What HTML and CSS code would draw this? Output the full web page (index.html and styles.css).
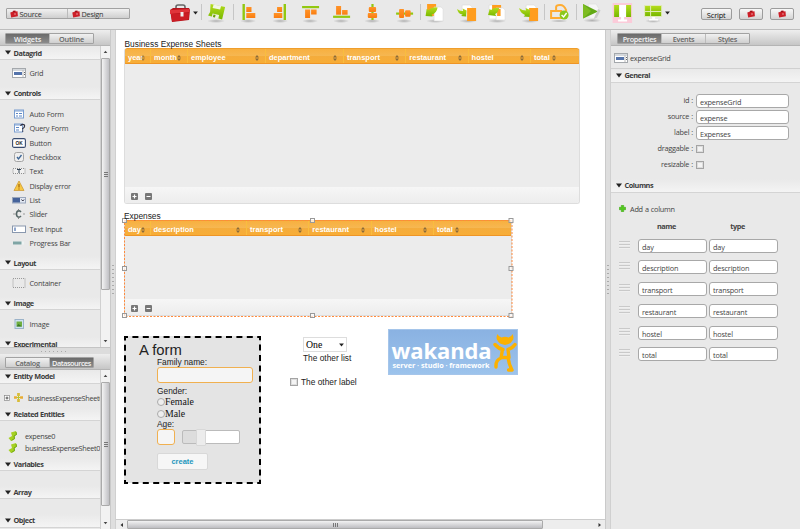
FILE: index.html
```
<!DOCTYPE html>
<html lang="en">
<head>
<meta charset="utf-8">
<title>GUI Designer</title>
<link rel="stylesheet" href="styles.css">
</head>
<body>
<svg class="defs" aria-hidden="true">
  <defs>
    <linearGradient id="og" x1="0" y1="0" x2="0" y2="1"><stop offset="0" stop-color="#ff9328"/><stop offset="1" stop-color="#f97c10"/></linearGradient>
    <linearGradient id="gg" x1="0" y1="0" x2="0" y2="1"><stop offset="0" stop-color="#b4dc1c"/><stop offset="1" stop-color="#78b800"/></linearGradient>
    <radialGradient id="sh"><stop offset="0" stop-color="#999" stop-opacity=".7"/><stop offset="1" stop-color="#999" stop-opacity="0"/></radialGradient>
    <symbol id="case" viewBox="0 0 20 19">
      <path d="M6 5V3q0-2 2-2h5q2 0 2 2v2" fill="none" stroke="#666" stroke-width="1.6"/>
      <path d="M0 6l3-2h16l1 2-1 10-17 2z" fill="#b5141c"/>
      <path d="M0 6l19-1 1 3-20 2z" fill="#e0343a"/>
      <path d="M1 10l18-1-.5 6.500-16.500 2z" fill="#cc1d25"/>
      <rect x="10.500" y="8" width="3" height="4.500" fill="#eee"/>
    </symbol>
    <symbol id="cam" viewBox="0 0 8 8">
      <path d="M.3 2.500L2.600 1.800 3 .8l2.400-.4.5 1 1.600-.2.400 5L1.200 7.600z" fill="#cc1f28"/>
      <path d="M3 1.800l2-.4" stroke="#7a1015" stroke-width=".7"/>
      <circle cx="5" cy="4" r=".8" fill="#eaa5a8"/>
    </symbol>
    <symbol id="sort" viewBox="0 0 4 6"><path d="M0 2.500L2 0l2 2.500zM0 3.500h4L2 6z" fill="#8a6a3a"/></symbol>
    <symbol id="tri" viewBox="0 0 6 5"><path d="M0 .5h6L3 4.500z" fill="#222"/></symbol>
    <symbol id="leaf" viewBox="0 0 10 10"><path d="M3 1.500l5-1.500 1 3.500-2.500 1.500.5 3-4 2-2.500-3L4 5z" fill="#a6d022"/><path d="M8 1l.5 2.500-2.500 1.500.5 2.500-3 2" fill="none" stroke="#6fa814" stroke-width="1"/></symbol>
    <symbol id="gridicon" viewBox="0 0 14 10">
      <rect x=".5" y=".5" width="13" height="9" fill="#fff" stroke="#a4a8ac"/><path d="M1 1h12v2H1z" fill="#d4d8dc"/><path d="M2 4h8v3H2z" fill="#5574ab"/><path d="M11 2v7" stroke="#bbb"/><path d="M12.500 4v1m0 1v1" stroke="#666"/>
    </symbol>
    <symbol id="plus" viewBox="0 0 7 7"><rect width="7" height="7" rx="1" fill="#777"/><path d="M1.500 3.500h4M3.500 1.500v4" stroke="#fff" stroke-width="1.200"/></symbol>
    <symbol id="minus" viewBox="0 0 7 7"><rect width="7" height="7" rx="1" fill="#777"/><path d="M1.500 3.500h4" stroke="#fff" stroke-width="1.200"/></symbol>
  </defs>
</svg>
<div class="app">
  <header class="toolbar">
    <div class="seg views">
      <span><svg class="mini"><use href="#cam"/></svg>Source</span>
      <span><svg class="mini"><use href="#cam"/></svg>Design</span>
    </div>
    <div class="toolbox"><svg class="big"><use href="#case"/></svg><svg class="caret"><use href="#tri"/></svg></div>
    <div class="tools">
      <svg class="sep" viewBox="0 0 31 28"><ellipse cx="15" cy="21" rx="9" ry="2" fill="url(#sh)"/><path d="M9.500 4l14.500 3-3 12.500L7 15.500l2-3.500z" fill="url(#gg)"/><path d="M12.500 4.500l7.500 1.500-1 3.500-7.500-1.500z" fill="#f2f6e6"/><path d="M11.500 13.500l6.500 1.500-.8 3.800-6.500-1.700z" fill="#eef3df"/><path d="M12.500 14.500l2 .5-.7 2.600-2-.5z" fill="#6a9d09"/></svg>
      <svg class="sep" viewBox="0 0 31 28"><ellipse cx="15" cy="21" rx="8" ry="2" fill="url(#sh)"/><rect x="9.400" y="4" width="2.400" height="16" fill="#92c810"/><rect x="13.200" y="7" width="5.200" height="5" fill="url(#og)"/><rect x="13.200" y="13" width="9" height="5" fill="url(#og)"/></svg>
      <svg viewBox="0 0 31 28"><ellipse cx="16" cy="21" rx="8" ry="2" fill="url(#sh)"/><rect x="19.500" y="4" width="2.400" height="16" fill="#92c810"/><rect x="13" y="7" width="5" height="5" fill="url(#og)"/><rect x="9.700" y="13" width="8.500" height="5" fill="url(#og)"/></svg>
      <svg viewBox="0 0 31 28"><ellipse cx="15" cy="21" rx="8" ry="2" fill="url(#sh)"/><rect x="7" y="6" width="17" height="2.200" fill="#92c810"/><rect x="10" y="9.500" width="5" height="8.500" fill="url(#og)"/><rect x="16" y="9.500" width="5.500" height="5" fill="url(#og)"/></svg>
      <svg viewBox="0 0 31 28"><ellipse cx="15" cy="21" rx="8" ry="2" fill="url(#sh)"/><rect x="7" y="15.700" width="17" height="2.200" fill="#92c810"/><rect x="10" y="6" width="5" height="8.700" fill="url(#og)"/><rect x="16" y="10" width="5.500" height="4.700" fill="url(#og)"/></svg>
      <svg viewBox="0 0 31 28"><ellipse cx="15" cy="21" rx="8" ry="2" fill="url(#sh)"/><rect x="14.300" y="4" width="2.200" height="16" fill="#92c810"/><rect x="11.700" y="7" width="7.300" height="5" rx="1" fill="url(#og)"/><rect x="10.700" y="13" width="9.300" height="5" rx="1" fill="url(#og)"/></svg>
      <svg viewBox="0 0 31 28"><ellipse cx="15" cy="21" rx="8" ry="2" fill="url(#sh)"/><rect x="7" y="12.500" width="17" height="2.200" fill="#92c810"/><rect x="10" y="9" width="5" height="9" rx="1" fill="url(#og)"/><rect x="16" y="10.300" width="5.500" height="6.400" rx="1" fill="url(#og)"/></svg>
      <svg class="sep" viewBox="0 0 31 28"><ellipse cx="15" cy="21" rx="9" ry="2" fill="url(#sh)"/><path d="M7 4h9v12H7z" fill="#ff9d1e"/><path d="M14 7h7l2 2v12h-9z" fill="#fff" stroke="#d8d8d8" stroke-width=".6"/><path d="M5.500 16l1-7 2 1q3-3.500 9-2.500-1 6-6 7l1 2z" fill="url(#gg)"/></svg>
      <svg viewBox="0 0 31 28"><ellipse cx="17" cy="21" rx="9" ry="2" fill="url(#sh)"/><path d="M11 5h8l2 2v9H11z" fill="#fff" stroke="#d8d8d8" stroke-width=".6"/><path d="M16 8h9v13h-9z" fill="#ff9d1e"/><path d="M6 9q3 2.500 6 2l-.5-2.500 4 2-.5 6-5-.5 1.500-1.500Q7 14 6 9z" fill="url(#gg)"/></svg>
      <svg viewBox="0 0 31 28"><ellipse cx="15" cy="21" rx="9" ry="2" fill="url(#sh)"/><path d="M7 5h8v14H7z" fill="#fff" stroke="#d8d8d8" stroke-width=".6"/><path d="M10 5h9v6h-9z" fill="#ff9d1e"/><path d="M14 8h7l2 2v10h-9z" fill="#fff" stroke="#d8d8d8" stroke-width=".6"/><path d="M15 9h3.500v7H15z" fill="#ff9d1e"/><path d="M6 15l1.500-6 1.500 1q3-3 8-2-1 5-4 6l1 2z" fill="url(#gg)"/></svg>
      <svg viewBox="0 0 31 28"><ellipse cx="17" cy="21" rx="9" ry="2" fill="url(#sh)"/><path d="M13 5h8l2 2v9H13z" fill="#fff" stroke="#d8d8d8" stroke-width=".6"/><path d="M16 8h9v13h-9z" fill="#ff9d1e"/><path d="M6 8q3 2.500 7 2.500l-.5-2.500 4.500 2-.5 7-6-.5 1.500-1.500Q7 13 6 8z" fill="url(#gg)"/></svg>
      <svg class="sep" viewBox="0 0 31 28"><ellipse cx="15" cy="21" rx="9" ry="1.500" fill="url(#sh)"/><path d="M12 11V7q0-2 4-2t6 5v5M7 11h10v7H7z" fill="none" stroke="#ffac32" stroke-width="2"/><circle cx="20" cy="15" r="4.500" fill="#8cc81c"/><path d="M17.500 15l2 2 3-4" fill="none" stroke="#fff" stroke-width="1.400"/></svg>
      <svg class="sep" viewBox="0 0 31 28"><ellipse cx="16" cy="20.500" rx="9" ry="2" fill="url(#sh)"/><path d="M12 4l8 0 3 5-2 10-8-1z" fill="#f6f6f6" stroke="#ddd" stroke-width=".6"/><path d="M7 4l15 7.500L7 18.500z" fill="#62aa16"/><path d="M7 4l8 7-8 7.500z" fill="#7dbc20"/><path d="M22 9l2.500 1.500-4 7.500-3 1z" fill="#ccc"/></svg>
      <svg viewBox="0 0 31 28"><rect x="5.500" y="3" width="19.500" height="20" fill="#fbcbd9"/><path d="M7 5h17v12H7z" fill="#fff"/><path d="M7 5h5v12H7zm12 0h5v12h-5z" fill="url(#gg)"/><path d="M14 17h3v2.500h3v2h-9v-2h3z" fill="#fff"/></svg>
      <svg viewBox="0 0 31 28"><ellipse cx="15" cy="21" rx="8" ry="2" fill="url(#sh)"/><path d="M6 5h18v12H6z" fill="#dfeab5"/><path d="M7 6h5v5H7zm6 0h10v5H13zM7 12h5v4H7zm6 0h10v4H13z" fill="url(#gg)"/><path d="M14 17h3v2h3v1.500h-9V19h3z" fill="#fff"/></svg>
    </div>
    <svg class="caret"><use href="#tri"/></svg>
    <div class="actions"><button class="script">Script</button><button><svg class="mini"><use href="#cam"/></svg></button><button><svg class="mini"><use href="#cam"/></svg></button></div>
  </header>

  <div class="work">
    <aside class="left">
      <section class="pane top">
        <div class="tabbar"><div class="seg two"><span class="on">Widgets</span><span>Outline</span></div></div>
        <div class="panebody">
          <div class="list">
            <h3><svg><use href="#tri"/></svg>Datagrid</h3>
            <ul><li><svg viewBox="0 0 14 10"><use href="#gridicon"/></svg>Grid</li></ul>
            <h3><svg><use href="#tri"/></svg>Controls</h3>
            <ul>
              <li><svg viewBox="0 0 14 10"><rect x="2.500" y="1" width="9" height="8" fill="#fff" stroke="#7b9ed0"/><path d="M3 2h8" stroke="#7b9ed0"/><path d="M4 4.500h2m1 0h3M4 7h2m1 0h3" stroke="#5c86c4"/></svg>Auto Form</li>
              <li><svg viewBox="0 0 14 10"><rect x="2.500" y="1" width="8" height="8" fill="#fff" stroke="#7b9ed0"/><path d="M3 2h7" stroke="#7b9ed0"/><path d="M4 4.500h3M4 7h3" stroke="#5c86c4"/><path d="M8.800 3q0-1.700 1.900-1.700t1.900 1.700-1.900 2.500v1m0 1v1.300" fill="none" stroke="#334" stroke-width="1.200"/></svg>Query Form</li>
              <li><svg viewBox="0 0 14 10"><rect x=".6" y=".6" width="12.800" height="8.800" rx="1.500" fill="#fff" stroke="#394c70" stroke-width="1.100"/><text x="3.500" y="7" class="ok">OK</text></svg>Button</li>
              <li><svg viewBox="0 0 14 10"><rect x="2.500" y=".5" width="9" height="9" rx="2" fill="#eee" stroke="#a5a5a5"/><path d="M5 5l1.500 2L9.500 3" fill="none" stroke="#3c6595" stroke-width="1.300"/></svg>Checkbox</li>
              <li><svg viewBox="0 0 14 10"><rect x="1" y="2.500" width="12" height="5" fill="#f0f0f0" stroke="#777" stroke-dasharray="1 1" stroke-width=".8"/><path d="M5 3.500h4M7 3.500v3.500" stroke="#345" stroke-width="1"/></svg>Text</li>
              <li><svg viewBox="0 0 14 10"><path d="M7 0l5 9.500H2z" fill="#f8c844" stroke="#c9942c" stroke-width=".7"/><path d="M7 3v3.500m0 1v1" stroke="#a0650a" stroke-width="1.200"/></svg>Display error</li>
              <li><svg viewBox="0 0 14 10"><rect x=".5" y="2.500" width="13" height="5.500" fill="#e2e8f2" stroke="#99a6bb"/><path d="M1 3h7v4.500H1z" fill="#46639b"/><path d="M9.500 4.500l1.300 1.500 1.300-1.500" fill="none" stroke="#334"/></svg>List</li>
              <li><svg viewBox="0 0 14 10"><path d="M1 5h3m7 0h2" stroke="#999"/><path d="M9 3q-1-1.200-2.200-1.200Q4.500 2 4.500 5t2.300 3.200Q8 8.200 9 7" fill="none" stroke="#566" stroke-width="1.500"/><path d="M6.500 0v1.500m0 7V10" stroke="#888"/></svg>Slider</li>
              <li><svg viewBox="0 0 14 10"><rect x=".5" y="2" width="13" height="6.500" fill="#fff" stroke="#8998ae"/><path d="M3 3.500v3.500" stroke="#234e9a"/></svg>Text Input</li>
              <li><svg viewBox="0 0 14 10"><path d="M1 3.500h11v3H1z" fill="#eef3f3"/><path d="M1 3.500h8.500v3H1z" fill="#7fa5a5"/></svg>Progress Bar</li>
            </ul>
            <h3><svg><use href="#tri"/></svg>Layout</h3>
            <ul><li><svg viewBox="0 0 14 10"><rect x="1" y=".5" width="12" height="9" fill="none" stroke="#999" stroke-dasharray="1 1"/></svg>Container</li></ul>
            <h3><svg><use href="#tri"/></svg>Image</h3>
            <ul><li><svg viewBox="0 0 14 10"><rect x="3" y=".5" width="8.500" height="9" fill="#cfe2f3" stroke="#9bb3c9"/><path d="M4.500 2.500h5.500v5H4.500z" fill="#6fae3f"/><path d="M4.500 7.500l2-2.500 3.500 2.500z" fill="#3b7a2a"/></svg>Image</li></ul>
            <h3 class="last"><svg><use href="#tri"/></svg>Experimental</h3>
          </div>
          <div class="vscroll"><svg viewBox="0 0 10 10"><path d="M5 3.500L7 6H3z"/></svg><div class="thumb t1"></div><svg class="end" viewBox="0 0 10 10"><path d="M3 4h4L5 6.500z"/></svg></div>
        </div>
      </section>
      <div class="hsplit"><i></i></div>
      <section class="pane bottom">
        <div class="tabbar"><div class="seg two"><span>Catalog</span><span class="on">Datasources</span></div></div>
        <div class="panebody">
          <div class="list sources">
            <h3><svg><use href="#tri"/></svg>Entity Model</h3>
            <ul class="em"><li><svg class="expand" viewBox="0 0 6 6"><rect x=".5" y=".5" width="5" height="5" fill="#fff" stroke="#888" stroke-width=".7"/><path d="M1.500 3h3M3 1.500v3" stroke="#333" stroke-width=".8"/></svg><svg class="star" viewBox="0 0 10 10"><path d="M5 1v8M1 5h8" stroke="#b8c82c" stroke-width="1.200"/><path d="M3.500 0h3v3.200h-3zM3.500 6.800h3V10h-3z" fill="#d9bc38"/><path d="M0 3.500h3.200v3H0zM6.800 3.500H10v3H6.800z" fill="#e8ac34"/></svg>businessExpenseSheet0</li></ul>
            <h3><svg><use href="#tri"/></svg>Related Entities</h3>
            <ul class="re"><li><svg class="leaf"><use href="#leaf"/></svg>expense0</li><li><svg class="leaf"><use href="#leaf"/></svg>businessExpenseSheet0</li></ul>
            <h3><svg><use href="#tri"/></svg>Variables</h3><ul class="gap"></ul>
            <h3><svg><use href="#tri"/></svg>Array</h3><ul class="gap"></ul>
            <h3><svg><use href="#tri"/></svg>Object</h3>
          </div>
          <div class="vscroll"><svg viewBox="0 0 10 10"><path d="M5 3.500L7 6H3z"/></svg><div class="thumb t2"></div><svg class="end" viewBox="0 0 10 10"><path d="M3 4h4L5 6.500z"/></svg></div>
        </div>
      </section>
    </aside>
    <div class="vsplit"><i></i></div>

    <main class="center">
      <div class="canvas">
        <div class="grid g1">
          <div class="ghead"><span>year<svg><use href="#sort"/></svg></span><span>month<svg><use href="#sort"/></svg></span><span>employee<svg><use href="#sort"/></svg></span><span>department<svg><use href="#sort"/></svg></span><span>transport<svg><use href="#sort"/></svg></span><span>restaurant<svg><use href="#sort"/></svg></span><span>hostel<svg><use href="#sort"/></svg></span><span>total<svg><use href="#sort"/></svg></span></div>
          <div class="gbody"></div>
          <div class="gfoot"><svg><use href="#plus"/></svg><svg><use href="#minus"/></svg></div>
        </div>
        <div class="caption c1">Business Expense Sheets</div>
        <div class="grid g2">
          <div class="ghead"><span>day<svg><use href="#sort"/></svg></span><span>description<svg><use href="#sort"/></svg></span><span>transport<svg><use href="#sort"/></svg></span><span>restaurant<svg><use href="#sort"/></svg></span><span>hostel<svg><use href="#sort"/></svg></span><span>total<svg><use href="#sort"/></svg></span></div>
          <div class="gbody"></div>
          <div class="gfoot"><svg><use href="#plus"/></svg><svg><use href="#minus"/></svg></div>
        </div>
        <svg class="selection" viewBox="0 0 392 101">
          <rect x="2.500" y="2.500" width="387.500" height="96" fill="none" stroke="#ff8a3c" stroke-dasharray="2 1.500"/>
          <g fill="#fff" fill-opacity=".7" stroke="#999"><rect x=".5" y=".5" width="4" height="4"/><rect x="188.500" y=".5" width="4" height="4"/><rect x="387" y=".5" width="4" height="4"/><rect x=".5" y="48.500" width="4" height="4"/><rect x="387" y="48.500" width="4" height="4"/><rect x=".5" y="95.500" width="4" height="4"/><rect x="188.500" y="95.500" width="4" height="4"/><rect x="387" y="95.500" width="4" height="4"/></g>
        </svg>
        <div class="caption c2">Expenses</div>

        <div class="form">
          <svg class="dashes" viewBox="0 0 137 148"><rect x="1" y="1" width="135" height="146" fill="none" stroke="#000" stroke-width="2" stroke-dasharray="6 4.400" stroke-dashoffset="3"/></svg>
          <h2>A form</h2>
          <div class="fields">
            <label>Family name:</label>
            <div class="inp wide"></div>
            <label class="gender">Gender:</label>
            <div class="radio"><i></i>Female</div>
            <div class="radio"><i></i>Male</div>
            <label class="age">Age:</label>
            <div class="agerow"><div class="inp small"></div><div class="slider"><b></b></div></div>
            <div class="create">create</div>
          </div>
        </div>
        <div class="combo"><div class="select">One<svg class="caret"><use href="#tri"/></svg></div><div>The other list</div></div>
        <div class="check"><i class="cb"></i>The other label</div>
        <div class="logo">
          <div class="words"><b>wakanda</b><span>server · studio · framework</span></div>
          <svg viewBox="0 0 24 40"><path d="M4.500 1q-2 4 0 6.500Q6 11 12 12q6-1 7.500-4.500 2-2.500 0-6.500-1 3-4 3.500Q12 3 8.500 4.500 5.500 4 4.500 1z" fill="#fcb100"/><path d="M2 11.500q4 4.500 8 5M15 16.500q4-1 7-5M9.500 16.500L8 25q-5.500 2-5 9M15 16.500l1 8M8.500 24.500H15q1 7 4 12.500h-3.500" fill="none" stroke="#fcb100" stroke-width="3.400" stroke-linecap="round" stroke-linejoin="round"/></svg>
        </div>
      </div>
      <div class="hscroll"><svg viewBox="0 0 10 10"><path d="M6.500 3v4L4 5z"/></svg><div class="hthumb"><i></i></div><svg class="end" viewBox="0 0 10 10"><path d="M4 3v4l2.500-2z"/></svg></div>
    </main>
    <div class="vsplit second"><i></i></div>

    <aside class="right">
      <div class="tabbar"><div class="seg three"><span class="on">Properties</span><span>Events</span><span>Styles</span></div></div>
      <div class="subject"><svg viewBox="0 0 14 10"><use href="#gridicon"/></svg>expenseGrid</div>
      <h3><svg><use href="#tri"/></svg>General</h3>
      <div class="props">
        <label>id :</label><div class="box">expenseGrid</div>
        <label>source :</label><div class="box">expense</div>
        <label>label :</label><div class="box">Expenses</div>
        <label>draggable :</label><i class="cb"></i>
        <label>resizable :</label><i class="cb"></i>
      </div>
      <h3><svg><use href="#tri"/></svg>Columns</h3>
      <div class="add"><svg viewBox="0 0 7 7"><path d="M2.300.3h2.400v2h2v2.400h-2v2H2.300v-2h-2V2.300h2z" fill="#52c81e" stroke="#3aa010" stroke-width=".5"/></svg>Add a column</div>
      <div class="cols">
        <i></i><b>name</b><b>type</b>
        <i class="drag"></i><div class="box">day</div><div class="box">day</div>
        <i class="drag"></i><div class="box">description</div><div class="box">description</div>
        <i class="drag"></i><div class="box">transport</div><div class="box">transport</div>
        <i class="drag"></i><div class="box">restaurant</div><div class="box">restaurant</div>
        <i class="drag"></i><div class="box">hostel</div><div class="box">hostel</div>
        <i class="drag"></i><div class="box">total</div><div class="box">total</div>
      </div>
    </aside>
  </div>
</div>
</body>
</html>
```
FILE: styles.css
```
* { box-sizing: border-box; }
body { margin: 0; width: 800px; height: 529px; overflow: hidden; font: 7.300px/10px "Open Sans", sans-serif; letter-spacing: -.23px; word-spacing: .4px; color: #444; background: #e9e9e9; }
ul, h2, h3 { margin: 0; padding: 0; list-style: none; }
svg { display: block; flex: none; }
.defs { position: absolute; width: 0; height: 0; }
.app { display: flex; flex-direction: column; height: 529px; }

/* toolbar */
.toolbar { display: flex; align-items: flex-start; height: 30px; flex: none; background: #e9e9e9; border-bottom: 1px solid #bdbdbd; }
.seg { display: flex; border: 1px solid #a2a2a2; border-radius: 1px; background: linear-gradient(#f1f1f1, #cfcfcf); font-weight: 600; color: #666; }
.seg span { flex: 1; display: flex; align-items: center; justify-content: center; line-height: 8px; min-width: 0; }
.seg span + span { border-left: 1px solid #bbb; }
.seg .on { background: linear-gradient(#6b6b6b, #8b8b8b); color: #f4f4f4; }
.views { margin: 8px 0 0 6px; width: 124px; height: 11px; font-weight: 400; color: #333; }
.views span { justify-content: flex-start; padding-left: 3px; gap: 1.500px; }
.views span + span { padding-left: 4px; }
.mini { width: 8px; height: 8px; }
.toolbox { display: flex; align-items: center; gap: 3px; margin: 3px 0 0 40px; height: 20px; width: 31.400px; }
.big { width: 20px; height: 19px; }
.caret { width: 5px; height: 4px; }
.tools { display: flex; }
.tools svg { width: 31.200px; height: 28px; }
.tools .sep { background: linear-gradient(#c6c6c6, #c6c6c6) 0 4px / 1px 16px no-repeat; }
.toolbar > .caret { margin: 11px 0 0 -4px; }
.actions { display: flex; gap: 7px; margin: 8px 0 0 30.500px; }
.actions button { display: flex; align-items: center; justify-content: center; width: 24px; height: 12px; padding: 0; border: 1px solid #9c9c9c; border-radius: 2px; background: linear-gradient(#f8f8f8, #d4d4d4); font: 7.500px/8px "Open Sans", sans-serif; letter-spacing: -.2px; color: #111; }
.actions .script { width: 31px; padding-top: 1px; }

.work { display: flex; flex: 1; min-height: 0; }
.tabbar { height: 16px; flex: none; padding: 3px 5px 0; background: linear-gradient(#eee, #c6c6c6); border-bottom: 1px solid #b4b4b4; }
.tabbar .seg { height: 11px; }
.two { width: 89px; }
.three { width: 133px; margin-left: 1px; }
.tabbar span { letter-spacing: -.3px; }
.top .seg span { letter-spacing: -.15px; }
.bottom .seg span + span { letter-spacing: -.45px; }
h3 { display: flex; align-items: center; height: 13.500px; flex: none; padding-left: 5px; gap: 2.500px; font-size: 7.300px; line-height: 10px; font-weight: 700; letter-spacing: -.45px; background: linear-gradient(#e9e9e9, #f4f4f4); border-bottom: 1px solid #d4d4d4; color: #3c3c3c; }
h3 svg { width: 6px; height: 5px; }

/* left column */
.left { display: flex; flex-direction: column; width: 110px; flex: none; }
.pane { display: flex; flex-direction: column; min-height: 0; }
.top { height: 317px; flex: none; }
.bottom { flex: 1; }
.panebody { display: flex; flex: 1; min-height: 0; }
.list { flex: 1; min-width: 0; overflow: hidden; padding-top: .5px; white-space: nowrap; }
.list ul { padding: 6.300px 0 6.300px 12px; }
.list li { display: flex; align-items: center; height: 14.350px; gap: 3.500px; }
.list li > svg { width: 14px; height: 10px; }
.ok { font: bold 4.800px "Liberation Sans", sans-serif; letter-spacing: 0; fill: #222; }
.sources { padding-top: 0; }
.sources li { letter-spacing: -.31px; }
.list ul.em { padding: 7px 0 3px 4px; }
.em li > .expand { width: 6px; height: 6px; }
.em li > .star { width: 9px; height: 9px; margin-right: 2px; }
.list ul.re { padding: 8.200px 0 4.300px 8px; }
.re li { height: 12px; gap: 7px; }
.re li > .leaf { width: 10px; height: 10px; }
.list ul.gap { padding: 0; height: 14.600px; }
.vscroll { display: flex; flex-direction: column; width: 10px; flex: none; background: #f2f2f2; border-left: 1px solid #d0d0d0; }
.vscroll svg { width: 9px; height: 12px; fill: #444; }
.vscroll .end, .hscroll .end { margin-top: auto; }
.thumb { display: flex; border: 1px solid #aaa; border-radius: 1px; background: linear-gradient(90deg, #f3f3f3, #c0c0c4); }
.thumb::after { content: ""; width: 4px; height: 5px; margin: auto; background: repeating-linear-gradient(#777 0 1px, transparent 1px 2px); }
.t1 { height: 232px; }
.t2 { height: 124px; }
.hsplit { display: flex; align-items: center; justify-content: center; height: 7px; flex: none; background: #dcdcdc; border-top: 1px solid #c4c4c4; }
.hsplit i { width: 28px; height: 1px; background: repeating-linear-gradient(90deg, #aaa 0 1px, transparent 1px 4px); }
.vsplit { display: flex; align-items: center; justify-content: center; width: 6px; flex: none; background: #dedede; border-left: 1px solid #cacaca; border-right: 1px solid #d0d0d0; }
.vsplit i { width: 2px; height: 29px; background: repeating-linear-gradient(#aaa 0 1px, transparent 1px 4px); }

/* design canvas */
.center { display: flex; flex-direction: column; width: 489px; flex: none; background: #fff; letter-spacing: 0; word-spacing: 0; }
.canvas { position: relative; flex: 1; font-family: "Liberation Sans", sans-serif; font-size: 8.350px; color: #222; }
.canvas > * { position: absolute; }
.c1 { left: 8.500px; top: 9px; }
.c2 { left: 8px; top: 181px; }
.grid { display: flex; flex-direction: column; border: 1px solid #ddd; border-top: 0; border-radius: 3px; overflow: hidden; }
.g1 { left: 8px; top: 18px; width: 456px; height: 156px; }
.g2 { left: 8px; top: 190px; width: 388px; height: 96px; }
.ghead { display: flex; height: 16px; margin: 0 -1px; flex: none; border: 1px solid #ef9e2c; border-bottom: 1px solid #ee9526; border-radius: 3px 3px 2px 2px; background: linear-gradient(#f8b040, #f6b751 48%, #f4ac3c 52%, #f8ad36); }
.ghead span { display: flex; align-items: center; padding: 3px 6px 0 3px; border-right: 1px solid #f9bd3e; font-weight: 700; font-size: 7.500px; line-height: 9px; color: #fff; }
.ghead span:last-child { border: 0; }
.ghead svg { width: 4px; height: 6px; margin-left: auto; flex: 0 0 4px; }
.g1 span:nth-child(1) { width: 26px; }
.g1 span:nth-child(2) { width: 37px; }
.g1 span:nth-child(3), .g1 span:nth-child(4) { width: 78px; }
.g1 span:nth-child(5), .g1 span:nth-child(6), .g1 span:nth-child(7) { width: 62.300px; }
.g1 span:nth-child(8) { width: 31px; }
.g2 span:nth-child(1) { width: 25.500px; }
.g2 span:nth-child(2) { width: 96.500px; }
.g2 span:nth-child(3), .g2 span:nth-child(4), .g2 span:nth-child(5) { width: 62.300px; }
.g2 span:nth-child(6) { width: 31px; }
.g1 span:first-child svg { margin-left: -2px; opacity: .75; }
.gbody { flex: 1; background: #ececec; }
.gfoot { display: flex; align-items: center; gap: 7px; height: 16px; padding: 3px 0 0 5.500px; flex: none; background: linear-gradient(#f6f6f6, #ededed); }
.gfoot svg { width: 7px; height: 7px; }
.selection { left: 6px; top: 188px; width: 392px; height: 101px; }
.form { left: 8px; top: 306px; width: 137px; height: 147px; background: #e4e4e4; }
.dashes { position: absolute; left: 0; top: 0; width: 137px; height: 148px; }
.form h2 { padding: 6px 0 0 15px; font-size: 14.800px; line-height: 16px; font-weight: 400; }
.fields { padding-left: 33px; display: flex; flex-direction: column; align-items: flex-start; }
.fields label { line-height: 9px; }
.inp { border: 1px solid #f0b050; border-radius: 3px; background: #f5f5f5; }
.wide { width: 96px; height: 16px; }
.fields .gender { margin-top: 3.500px; }
.radio { display: flex; align-items: center; height: 12.500px; font: 9.800px/12px "Liberation Serif", serif; color: #111; }
.radio i { width: 8px; height: 8px; border: 1px solid #aaa; border-radius: 50%; background: #eee; }
.fields .age { margin-top: -.5px; }
.agerow { display: flex; gap: 7px; }
.small { width: 18px; height: 16px; }
.slider { display: flex; width: 58px; height: 14px; margin-top: 1px; border: 1px solid #bbb; border-radius: 2px; background: linear-gradient(90deg, #ddd 20px, #fff 20px); }
.slider b { width: 10px; height: 17px; margin: -2px 0 0 13px; border: 1px solid #d8d8d8; background: #ececec; border-radius: 1px; }
.create { width: 51px; height: 17px; margin-top: 8px; border: 1px solid #d8d8d8; border-radius: 2px; background: #f6f6f6; color: #1c97bd; font-weight: 700; font-size: 7.500px; line-height: 16px; text-align: center; }
.combo { left: 187px; top: 307px; white-space: nowrap; }
.select { display: flex; align-items: center; justify-content: space-between; width: 44px; height: 15px; margin-bottom: 1px; padding: 0 2px 0 2px; border: 1px solid #ddd; font: 9.800px/12px "Liberation Serif", serif; color: #000; }
.check { display: flex; align-items: center; gap: 3px; left: 174px; top: 347px; white-space: nowrap; }
.cb { width: 8px; height: 8px; border: 1px solid #a4a4a4; background: #f4f4f4; box-shadow: inset 0 0 0 1px #ddd; }
.logo { display: flex; left: 272px; top: 299px; width: 130px; height: 46px; background: linear-gradient(#8ab2e2, #9cc3ec); border: 1px solid #a5c5ea; color: #fff; }
.logo .words { width: 104px; padding: 9px 0 0 2.500px; white-space: nowrap; }
.logo b { display: block; font: 700 22px/22px "Open Sans", sans-serif; letter-spacing: -.1px; }
.logo span { display: block; font: 700 7.300px/8px "Open Sans", sans-serif; letter-spacing: -.05px; margin-left: 1px; }
.logo svg { width: 24px; height: 40px; margin-top: 3px; }
.hscroll { display: flex; height: 10px; flex: none; background: #ededed; border-top: 1px solid #ccc; }
.hscroll svg { width: 11px; height: 10px; fill: #333; }
.hscroll .end { margin: 0 0 0 auto; }
.hthumb { display: flex; width: 416px; border: 1px solid #aaa; border-radius: 1px; background: linear-gradient(#f2f2f2, #bdbdc1); }
.hthumb i { width: 5px; height: 4px; margin: auto; background: repeating-linear-gradient(90deg, #777 0 1px, transparent 1px 2px); }

/* properties */
.right { flex: 1; min-width: 0; background: #e9e9e9; }
.subject { display: flex; align-items: center; gap: 2px; height: 23px; padding: 2px 0 0 3px; border-bottom: 1px solid #d0d0d0; }
.subject svg { width: 14px; height: 10px; }
.props { display: grid; grid-template-columns: 82px 93px; column-gap: 3px; grid-auto-rows: 16.200px; height: 96.500px; padding-top: 11px; justify-items: start; align-items: start; }
.props label { justify-self: end; padding-top: 1px; }
.box { width: 100%; height: 14px; padding: 3px 0 0 3px; border: 1px solid #a8a8a8; border-radius: 3px; background: #fff; line-height: 9px; letter-spacing: -.17px; }
.props .cb { margin-top: 3px; }
.add { display: flex; align-items: center; gap: 4px; padding: 11px 0 0 8px; box-sizing: content-box; height: 10px; }
.add svg { width: 7px; height: 7px; }
.cols { display: grid; grid-template-columns: 17px 69px 69px; column-gap: 2px; grid-template-rows: 25px; grid-auto-rows: 21.750px; padding-left: 8px; align-items: start; }
.cols b { text-align: center; padding: 7.500px 12px 0 0; letter-spacing: -.4px; }
.drag { width: 11px; height: 8px; margin-top: 2px; background: repeating-linear-gradient(#c9c9c9 0 1px, #efefef 1px 2px, transparent 2px 3px); }
```
